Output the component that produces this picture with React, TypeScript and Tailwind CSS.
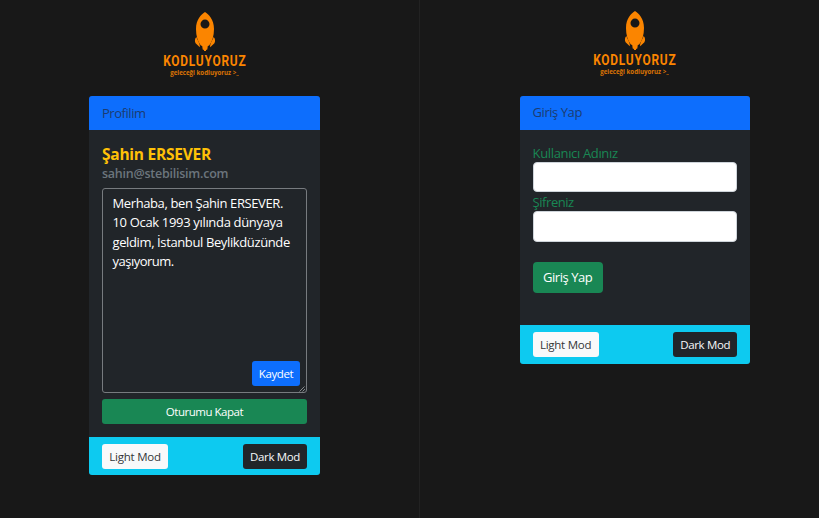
import type { ReactNode } from "react";

function Logo() {
  return (
    <svg width="90" height="76" viewBox="0 0 90 76" fill="#fb8500" className="block overflow-visible">
      <path
        fillRule="evenodd"
        d="M45 2C48.500 4 54 9.500 54 19C54 26 52.200 31.500 49.200 35.500L47.800 36L47.300 39.500L46 40V41H44V40L42.700 39.500L42.200 36L40.800 35.500C37.800 31.500 36 26 36 19C36 9.500 41.500 4 45 2ZM45 9.600A4.500 4.500 0 1 0 45 18.600A4.500 4.500 0 1 0 45 9.600Z"
      />
      <path d="M36.400 27C34.700 28.500 34.500 31.500 35.600 33.300L39.800 37.200C40.300 33.800 37.700 31 36.400 27Z" />
      <path d="M53.600 27C55.300 28.500 55.500 31.500 54.400 33.300L50.200 37.200C49.700 33.800 52.300 31 53.600 27Z" />
      <text x="3.200" y="55.700" fontSize="14" fontWeight="700" letterSpacing="0.900" fontFamily="Roboto, sans-serif" textLength="83.300" lengthAdjust="spacingAndGlyphs">
        KODLUYORUZ
      </text>
      <text x="10.200" y="64.600" fontSize="7.200" fontWeight="700" fontFamily="'Open Sans', sans-serif" textLength="68.500" lengthAdjust="spacingAndGlyphs" opacity=".85">
        geleceği kodluyoruz &gt;_
      </text>
    </svg>
  );
}

function Card({ title, width, header, footer, children }: { title: ReactNode; width: string; header: string; footer: string; children: ReactNode }) {
  return (
    <section className={`${width} flex flex-col overflow-hidden rounded-[3px] bg-[#212529]`}>
      <header className={`${header} flex shrink-0 items-center bg-[#0d6efd] px-[13px] text-[#1c3c70]`}>{title}</header>
      <div className="flex grow flex-col px-[13px]">{children}</div>
      <footer className={`${footer} flex shrink-0 justify-between bg-[#0dcaf0] px-[13px] text-[11.5px] leading-[25px]`}>
        <button className="h-[25px] w-[66px] rounded-[3px] bg-[#f8f9fa] tracking-[-0.24px] text-[#343638]">Light Mod</button>
        <button className="h-[25px] w-[64px] rounded-[3px] bg-[#212529] tracking-[-0.35px] text-[#f8f9fa]">Dark Mod</button>
      </footer>
    </section>
  );
}

export default function App() {
  return (
    <main className="flex h-[518px] w-[819px] overflow-hidden bg-[#181818] font-['Open_Sans',sans-serif] text-[13px]">
      <div className="flex w-[420px] flex-col border-r border-[#222222] pl-[89px]">
        <div className="h-[96px] pt-[10px] pl-[70.500px]">
          <Logo />
        </div>
        <div className="flex h-[379px]">
          <Card width="w-[231px]" header="h-[34px] pt-[2px]" footer="h-[38px] pt-[7px]" title={<span className="tracking-[-0.45px]">Profilim</span>}>
            <h1 className="mt-[13px] h-[22px] text-[15.500px] leading-[22px] font-bold tracking-[-0.250px] text-[#ffc107]">Şahin ERSEVER</h1>
            <p className="h-[18px] text-[12.500px] leading-[18px] font-semibold tracking-[-0.24px] text-[#6c757d]">sahin@stebilisim.com</p>
            <div className="mt-[5px] flex h-[205px] flex-col rounded-[3px] border border-[#777b7f] bg-[#212529] pt-[4.500px] pl-[9.500px] text-[13px] leading-[19.500px] whitespace-nowrap text-white">
              <div className="tracking-[-0.39px]">Merhaba, ben Şahin ERSEVER.</div>
              <div className="tracking-[-0.33px]">10 Ocak 1993 yılında dünyaya</div>
              <div className="tracking-[-0.38px]">geldim, İstanbul Beylikdüzünde</div>
              <div className="tracking-[-0.5px]">yaşıyorum.</div>
              <button className="mt-auto mr-[6px] h-[25px] w-[48px] self-end rounded-[3px] bg-[#0d6efd] text-[11.500px] leading-[25px] tracking-[-0.4px]">Kaydet</button>
              <svg className="self-end" width="7" height="6" viewBox="0 0 7 6" fill="none" stroke="#a0a3a5" strokeWidth=".8">
                <path d="M0.500 5.500L5.500 0.500M3.500 5.500L6 3" />
              </svg>
            </div>
            <button className="mt-[6px] h-[25px] rounded-[3px] bg-[#198754] text-[11.500px] leading-[25px] tracking-[-0.48px] text-white">Oturumu Kapat</button>
          </Card>
        </div>
      </div>
      <div className="flex w-[399px] flex-col pl-[99.600px]">
        <div className="h-[96px] pt-[9px] pl-[70px]">
          <Logo />
        </div>
        <div className="flex h-[267.500px]">
          <Card width="w-[230.600px]" header="h-[33.500px]" footer="h-[39px] pt-[7px]" title={<span className="tracking-[-0.450px]">Giriş Yap</span>}>
            <label htmlFor="user" className="mt-[14px] h-[18.500px] text-[13px] leading-[19px] tracking-[-0.350px] text-[#198754]">Kullanıcı Adınız</label>
            <input id="user" className="h-[30px] rounded-[4px] border border-[#ced4da] bg-white px-2 outline-none" />
            <label htmlFor="password" className="h-[19px] text-[13px] leading-[20px] tracking-[-0.450px] text-[#198754]">Şifreniz</label>
            <input id="password" type="password" className="h-[31px] rounded-[4px] border border-[#ced4da] bg-white px-2 outline-none" />
            <button className="mt-[20px] h-[31px] w-[70px] rounded-[4px] bg-[#198754] text-[13px] leading-[31px] tracking-[-0.450px] text-white">Giriş Yap</button>
          </Card>
        </div>
      </div>
    </main>
  );
}
